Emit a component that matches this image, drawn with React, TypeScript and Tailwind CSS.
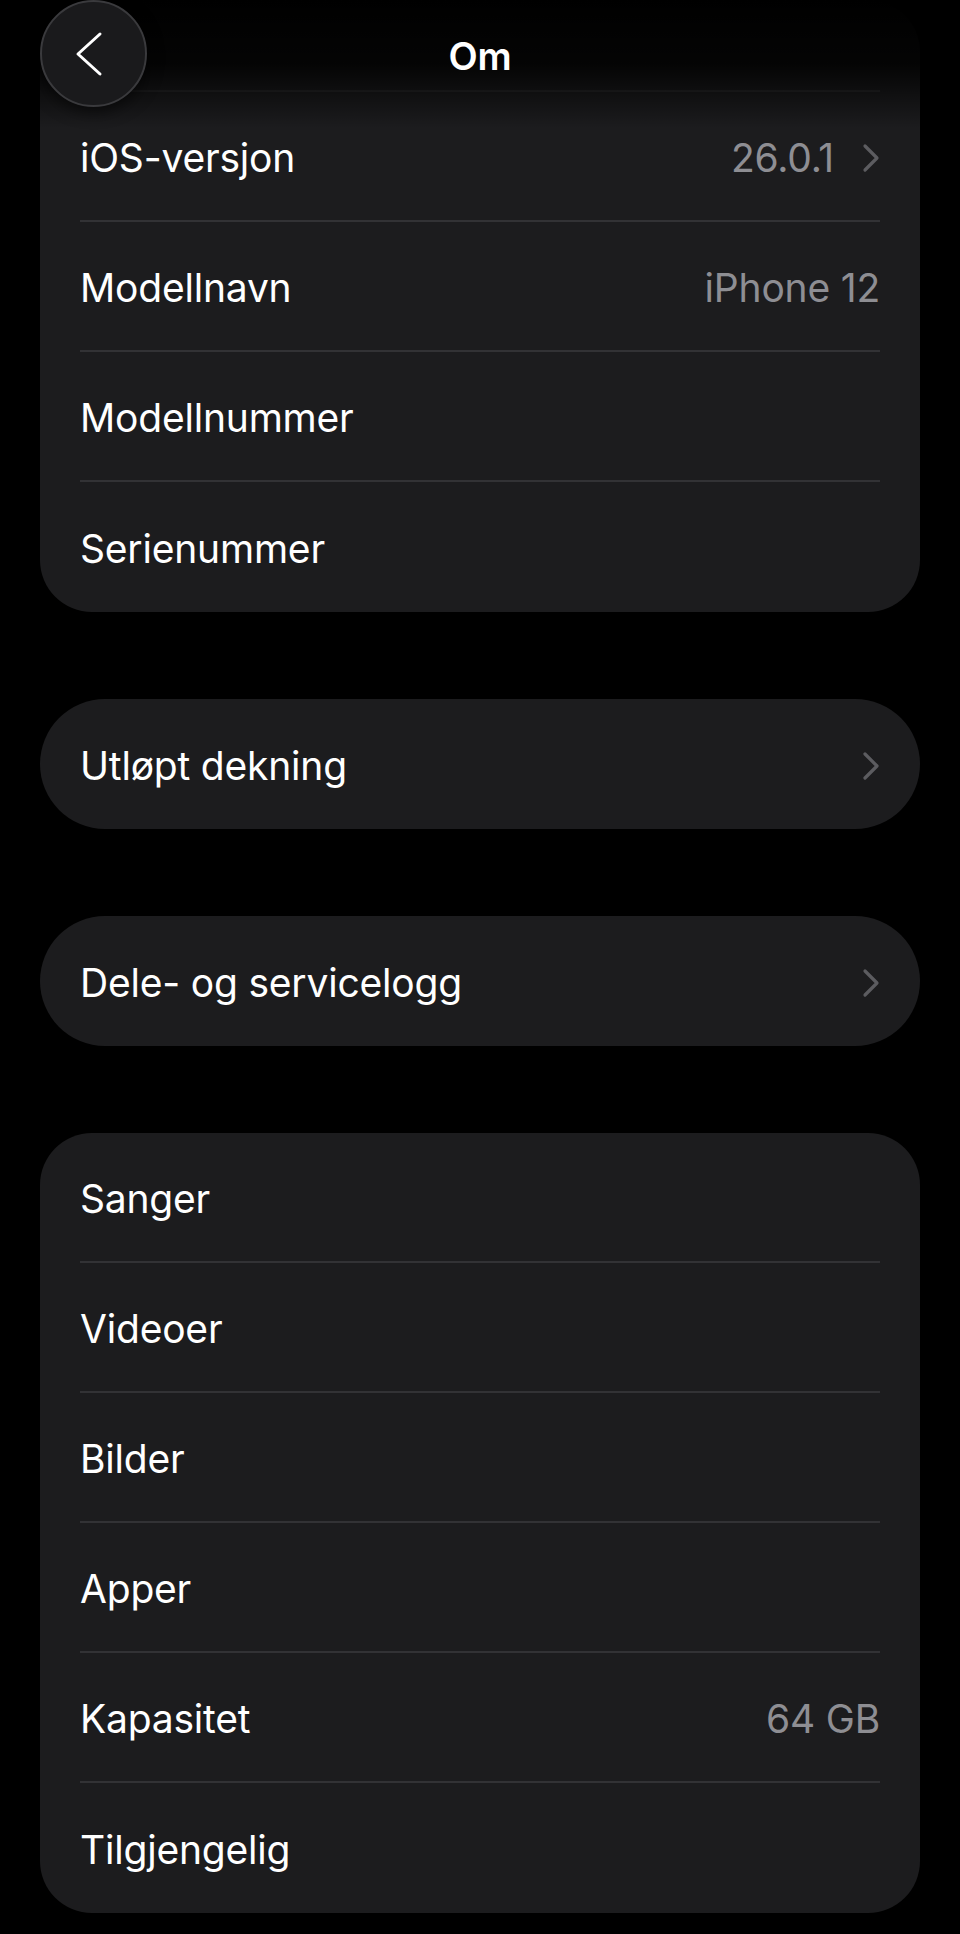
import { ReactNode } from 'react'

interface RowProps {
  label: string
  value?: string
  chevron?: boolean
  last?: boolean
}

function Chevron() {
  return (
    <svg width="18" height="30" viewBox="0 0 18 30" fill="none" className="shrink-0">
      <path
        d="M3 3 L15 15 L3 27"
        stroke="#5c5c60"
        strokeWidth="3.2"
        strokeLinecap="round"
        strokeLinejoin="round"
      />
    </svg>
  )
}

function Row({ label, value, chevron, last }: RowProps) {
  return (
    <div
      className={`flex items-center justify-between h-[130px] pt-[4px] ${
        last ? '' : 'border-b-2 border-[#323235]'
      }`}
    >
      <span className="text-white text-[39px] tracking-[-0.2px]">{label}</span>
      <span className="flex items-center gap-[28px]">
        {value && <span className="text-[#8e8e93] text-[39px] tracking-[-0.2px]">{value}</span>}
        {chevron && <Chevron />}
      </span>
    </div>
  )
}

function Card({ children, pill }: { children: ReactNode; pill?: boolean }) {
  return (
    <div className={`bg-[#1c1c1e] px-10 ${pill ? 'rounded-full' : 'rounded-[52px]'}`}>
      {children}
    </div>
  )
}

export default function App() {
  return (
    <div
      className="relative w-full min-h-[1934px] bg-black overflow-hidden"
      style={{ fontFamily: 'Inter, "Noto Sans", sans-serif' }}
    >
      <div className="flex flex-col gap-[87px] px-10 pb-[20px]">
        <Card>
          <div className="h-[92px] border-b-2 border-[#2a2a2c]" />
          <Row label="iOS-versjon" value="26.0.1" chevron />
          <Row label="Modellnavn" value="iPhone 12" />
          <Row label="Modellnummer" />
          <Row label="Serienummer" last />
        </Card>

        <Card pill>
          <Row label="Utløpt dekning" chevron last />
        </Card>

        <Card pill>
          <Row label="Dele- og servicelogg" chevron last />
        </Card>

        <Card>
          <Row label="Sanger" />
          <Row label="Videoer" />
          <Row label="Bilder" />
          <Row label="Apper" />
          <Row label="Kapasitet" value="64 GB" />
          <Row label="Tilgjengelig" last />
        </Card>
      </div>

      {/* header over the scrolled list */}
      <div className="absolute inset-x-0 top-0 h-[128px] bg-gradient-to-b from-black via-black/85 to-transparent pointer-events-none" />
      <div className="absolute inset-x-0 top-0 h-[112px] flex items-center justify-center">
        <span className="text-white text-[38px] font-semibold tracking-[-0.3px]">Om</span>
      </div>
      <button className="absolute left-10 top-0 w-[107px] h-[107px] rounded-full bg-[#1a1a1c] border-2 border-[#3a3a3d] flex items-center justify-center shadow-[0_4px_16px_rgba(0,0,0,0.6)]">
        <svg width="30" height="46" viewBox="0 0 30 46" fill="none" className="-ml-[10px]">
          <path
            d="M26 3 L4 23 L26 43"
            stroke="white"
            strokeWidth="3"
            strokeLinecap="round"
            strokeLinejoin="round"
          />
        </svg>
      </button>
    </div>
  )
}
